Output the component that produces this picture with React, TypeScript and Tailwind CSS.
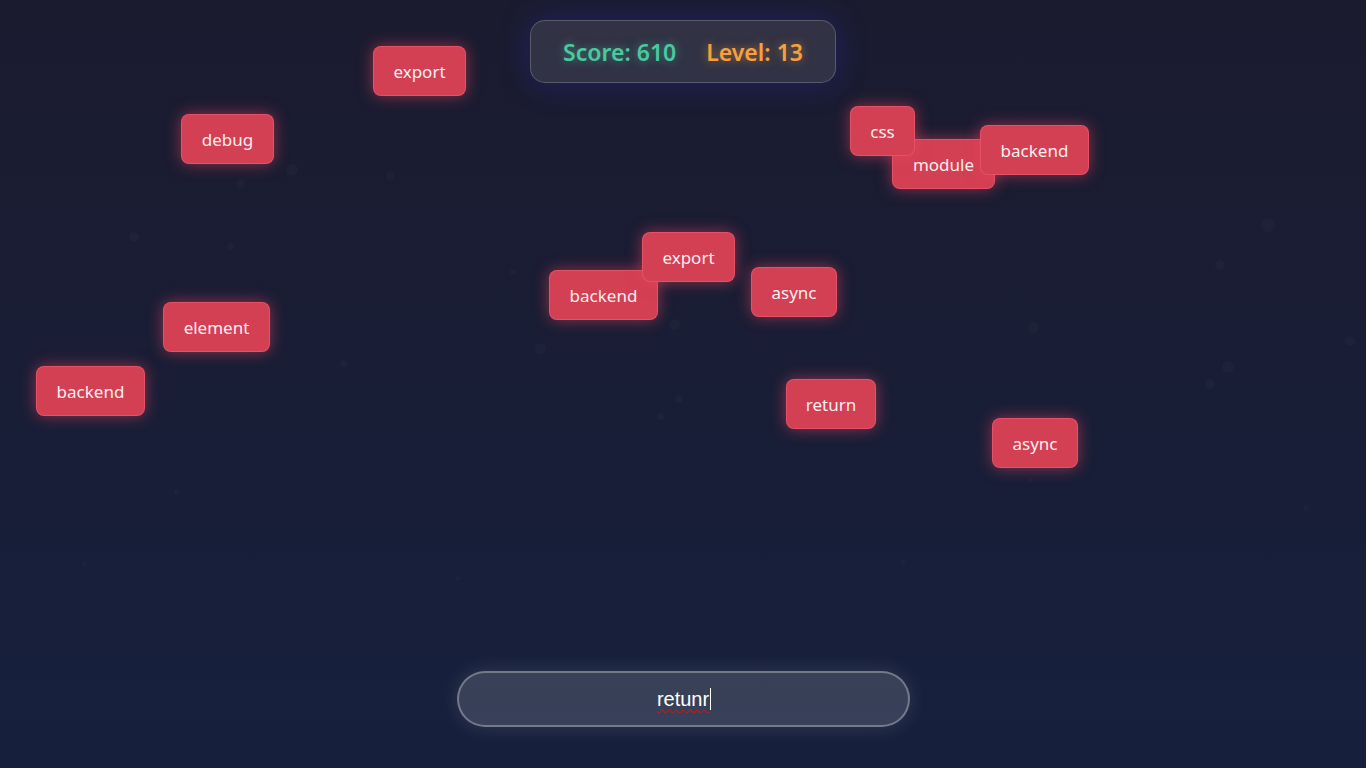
import React from "react";

type FallingWord = { text: string; x: number; y: number; w: number };

// draw order matters: later items sit on top of earlier ones
const words: FallingWord[] = [
  { text: "export", x: 373, y: 46, w: 93 },
  { text: "debug", x: 181, y: 114, w: 93 },
  { text: "module", x: 892, y: 139, w: 103 },
  { text: "css", x: 850, y: 106, w: 65 },
  { text: "backend", x: 980, y: 125, w: 109 },
  { text: "backend", x: 549, y: 270, w: 109 },
  { text: "export", x: 642, y: 232, w: 93 },
  { text: "async", x: 751, y: 267, w: 86 },
  { text: "element", x: 163, y: 302, w: 107 },
  { text: "backend", x: 36, y: 366, w: 109 },
  { text: "return", x: 786, y: 379, w: 90 },
  { text: "async", x: 992, y: 418, w: 86 },
];

const particles = [
  [1268, 225, 14], [1220, 265, 10], [1228, 367, 12], [1210, 384, 10], [1350, 341, 10],
  [134, 237, 10], [240, 183, 9], [230, 246, 7], [390, 176, 8], [540, 348, 11],
  [674, 324, 11], [679, 399, 8], [660, 416, 7], [343, 363, 7], [1033, 327, 11],
  [513, 272, 6], [176, 492, 5], [1305, 508, 5], [903, 562, 5], [457, 578, 5],
  [84, 563, 5], [292, 170, 12], [1030, 480, 4],
];

export default function App() {
  return (
    <main className="relative flex h-[768px] w-full flex-col items-center justify-between overflow-hidden bg-gradient-to-b from-[#1b1b2f] to-[#16203d] pt-5 pb-[41px] font-['Noto_Sans',sans-serif] text-white">
      {particles.map(([x, y, s], i) => (
        <span
          key={i}
          className="absolute rounded-full bg-white/[0.025]"
          style={{ left: x - s / 2, top: y - s / 2, width: s, height: s }}
        />
      ))}

      <header className="relative z-20 flex h-[63px] w-[306px] items-center justify-center gap-[30px] rounded-[15px] border border-white/20 bg-white/10 pt-0.5 shadow-[0_0_30px_rgba(50,50,190,0.35)]">
        <span className="text-[23px] font-semibold text-[#4ac8a0] [text-shadow:0_0_10px_rgba(74,200,160,0.55)]">
          Score: 610
        </span>
        <span className="text-[23px] font-semibold text-[#f7a03e] [text-shadow:0_0_10px_rgba(247,160,62,0.55)]">
          Level: 13
        </span>
      </header>

      {words.map((word, i) => (
        <div
          key={i}
          className="absolute z-10 flex h-[50px] items-center justify-center rounded-lg border border-[#ff7088]/40 bg-[#d33f53] pt-0.5 text-[17px] text-[#fbeef0] shadow-[0_0_15px_rgba(233,69,96,0.55)]"
          style={{ left: word.x, top: word.y, width: word.w }}
        >
          {word.text}
        </div>
      ))}

      <div className="relative z-20 flex h-14 w-[453px] items-center justify-center rounded-full border-2 border-white/30 bg-white/15 pl-0.5 shadow-[0_0_20px_rgba(255,255,255,0.12)]">
        <span className="font-['Liberation_Sans',Arial,sans-serif] text-[20px] text-white underline decoration-[#d11] decoration-wavy decoration-1 underline-offset-[3px]">
          retunr
        </span>
        <span className="ml-px h-[22px] w-px bg-white" />
      </div>
    </main>
  );
}
